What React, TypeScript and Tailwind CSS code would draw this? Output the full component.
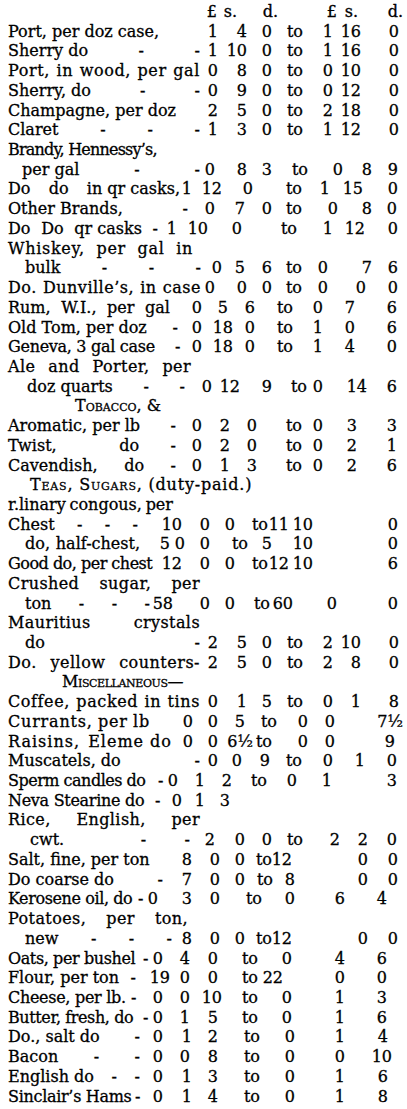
import type { ReactNode } from "react";

// column templates: label | £ | s. | d. | to | £ | s. | d.
const H = "grid-cols-[192px_17px_20px_41px_25px_34px_21px_45px]";
const STD = "grid-cols-[192px_18px_29px_25px_31px_30px_28px_38px]";
const T8 = "grid-cols-[192px_15px_32px_25px_36px_35px_29px_26px]";
const T9 = "grid-cols-[172px_12px_30px_31px_49px_28px_33px_35px]";
const T10 = "grid-cols-[180px_27px_30px_27px_30px_36px_34px_25px]";
const T11 = "grid-cols-[150px_19px_31px_34px_55px_36px_32px_33px]";
const T13 = "grid-cols-[193px_21px_23px_27px_30px_26px_44px_26px]";
const T14 = "grid-cols-[193px_14px_32px_25px_30px_26px_38px_32px]";
const T15 = "grid-cols-[162px_32px_26px_27px_38px_30px_32px_42px]";
const T16 = "grid-cols-[170px_24px_31px_22px_38px_30px_32px_42px]";
const T17 = "grid-cols-[172px_22px_31px_22px_38px_30px_32px_42px]";
const T19 = "grid-cols-[177px_27px_28px_32px_35px_16px_44px_30px]";
const TA = "grid-cols-[168px_26px_28px_27px_45px_21px_34px_40px]";
const TCH = "grid-cols-[130px_44px_28px_25px_33px_21px_24px_85px]";
const T27 = "grid-cols-[132px_30px_15px_25px_38px_24px_41px_85px]";
const T30 = "grid-cols-[142px_23px_37px_25px_35px_23px_44px_61px]";
const T36 = "grid-cols-[142px_43px_25px_27px_32px_31px_27px_68px]";
const T37 = "grid-cols-[164px_21px_25px_35px_19px_36px_27px_60px]";
const T38 = "grid-cols-[192px_18px_24px_28px_32px_31px_32px_32px]";
const T39 = "grid-cols-[155px_15px_27px_27px_35px_30px_35px_65px]";
const T40 = "grid-cols-[152px_22px_23px_25px]";
const T42 = "grid-cols-[182px_25px_30px_27px_31px_37px_28px_29px]";
const T43 = "grid-cols-[167px_17px_28px_25px_27px_20px_76px_30px]";
const T44 = "grid-cols-[155px_29px_28px_25px_28px_22px_73px_30px]";
const T45 = "grid-cols-[135px_15px_34px_28px_42px_33px_50px_42px]";
const T47 = "grid-cols-[164px_20px_28px_25px_27px_20px_76px_30px]";
const TO = "grid-cols-[140px_15px_27px_28px_40px_34px_53px_42px]";
const T49 = "grid-cols-[128px_34px_20px_28px_40px_25px_62px_42px]";
const T50 = "grid-cols-[128px_27px_27px_32px_36px_34px_53px_42px]";
const T52 = "grid-cols-[132px_23px_29px_26px_42px_35px_50px_43px]";
const T53 = "grid-cols-[132px_23px_27px_28px_42px_35px_50px_47px]";

type Row =
  | { t: "n"; c: string; p: string[]; v: string[]; i?: string; x?: string }
  | { t: "t"; p: string[]; w?: string; i?: string; x?: string }
  | { t: "h"; node: ReactNode; i: string };

const sc = "[font-variant-caps:small-caps]";

const rows: Row[] = [
  { t: "n", c: H, p: [""], v: ["£", "s.", "d.", "", "£", "s.", "d."] },
  { t: "n", c: STD, p: ["Port, per doz case,"], v: ["1", "4", "0", "to", "1", "16", "0"] },
  { t: "n", c: STD, p: ["Sherry do", "-", "-"], v: ["1", "10", "0", "to", "1", "16", "0"] },
  { t: "n", c: STD, p: ["Port,", "in", "wood,", "per", "gal"], v: ["0", "8", "0", "to", "0", "10", "0"], x: "tracking-[0.6px]" },
  { t: "n", c: STD, p: ["Sherry, do", "-", "-"], v: ["0", "9", "0", "to", "0", "12", "0"] },
  { t: "n", c: STD, p: ["Champagne, per doz"], v: ["2", "5", "0", "to", "2", "18", "0"] },
  { t: "n", c: STD, p: ["Claret", "-", "-", "-"], v: ["1", "3", "0", "to", "1", "12", "0"] },
  { t: "t", p: ["Brandy, Hennessy’s,"], x: "tracking-[-0.8px]" },
  { t: "n", c: T8, i: "pl-[14px]", p: ["per gal", "-", "-"], v: ["0", "8", "3", "to", "0", "8", "9"] },
  { t: "n", c: T9, p: ["Do", "do", "in qr casks,"], v: ["1", "12", "0", "to", "1", "15", "0"] },
  { t: "n", c: T10, p: ["Other Brands,", "-"], v: ["0", "7", "0", "to", "0", "8", "0"] },
  { t: "n", c: T11, p: ["Do", "Do", "qr casks", "-"], v: ["1", "10", "0", "to", "1", "12", "0"] },
  { t: "t", p: ["Whiskey,", "per", "gal", "in"], w: "w-[185px]", x: "tracking-[0.7px]" },
  { t: "n", c: T13, i: "pl-[17px]", p: ["bulk", "-", "-", "-"], v: ["0", "5", "6", "to", "0", "7", "6"] },
  { t: "n", c: T14, p: ["Do.", "Dunville’s,", "in", "case"], v: ["0", "0", "0", "to", "0", "0", "0"], x: "tracking-[0.5px]" },
  { t: "n", c: T15, p: ["Rum,", "W.I.,", "per", "gal"], v: ["0", "5", "6", "to", "0", "7", "6"] },
  { t: "n", c: T16, p: ["Old Tom, per doz", "-"], v: ["0", "18", "0", "to", "1", "0", "6"] },
  { t: "n", c: T17, p: ["Geneva, 3 gal case", "-"], v: ["0", "18", "0", "to", "1", "4", "0"], x: "tracking-[-0.3px]" },
  { t: "t", p: ["Ale", "and", "Porter,", "per"], w: "w-[183px]", x: "tracking-[0.4px]" },
  { t: "n", c: T19, i: "pl-[19px]", p: ["doz quarts", "-", "-"], v: ["0", "12", "9", "to", "0", "14", "6"] },
  { t: "h", i: "pl-[67px]", node: <span className={sc}>Tobacco, &amp;</span> },
  { t: "n", c: TA, p: ["Aromatic, per lb", "-"], v: ["0", "2", "0", "to", "0", "3", "3"] },
  { t: "n", c: TA, p: ["Twist,", "", "do", "-"], v: ["0", "2", "0", "to", "0", "2", "1"] },
  { t: "n", c: TA, p: ["Cavendish,", "do", "-"], v: ["0", "1", "3", "to", "0", "2", "6"] },
  {
    t: "h",
    i: "pl-[22px] tracking-[0.8px]",
    node: (
      <>
        <span className={sc}>Teas, Sugars,</span> (duty-paid.)
      </>
    ),
  },
  { t: "t", p: ["r.linary", "congous,", "per"], w: "w-[165px]" },
  { t: "n", c: TCH, p: ["Chest", "-", "-", "-"], v: ["10", "0", "0", "to", "11", "10", "0"] },
  { t: "n", c: T27, i: "pl-[17px]", p: ["do,", "half-chest,"], v: ["5", "0", "0", "to", "5", "10", "0"] },
  { t: "n", c: TCH, p: ["Good do, per chest"], v: ["12", "0", "0", "to", "12", "10", "6"], x: "tracking-[-0.5px]" },
  { t: "t", p: ["Crushed", "sugar,", "per"], w: "w-[192px]", x: "tracking-[0.4px]" },
  { t: "n", c: T30, i: "pl-[17px]", p: ["ton", "-", "-", "-"], v: ["58", "0", "0", "to", "60", "0", "0"] },
  { t: "t", p: ["Mauritius", "crystals"], w: "w-[192px]", x: "tracking-[0.4px]" },
  { t: "n", c: STD, i: "pl-[17px]", p: ["do", "-"], v: ["2", "5", "0", "to", "2", "10", "0"] },
  { t: "n", c: STD, p: ["Do.", "yellow", "counters-"], v: ["2", "5", "0", "to", "2", "8", "0"], x: "tracking-[0.5px]" },
  { t: "h", i: "pl-[54px] tracking-[-0.4px]", node: <span className={sc}>Miscellaneous—</span> },
  { t: "n", c: STD, p: ["Coffee,", "packed", "in", "tins"], v: ["0", "1", "5", "to", "0", "1", "8"], x: "tracking-[0.6px]" },
  { t: "n", c: T36, p: ["Currants,", "per", "lb"], v: ["0", "0", "5", "to", "0", "0", "7½"], x: "tracking-[0.8px]" },
  { t: "n", c: T37, p: ["Raisins,", "Eleme do"], v: ["0", "0", "6½", "to", "0", "0", "9"], x: "tracking-[1px]" },
  { t: "n", c: T38, p: ["Muscatels, do", "-"], v: ["0", "0", "9", "to", "0", "1", "0"] },
  { t: "n", c: T39, p: ["Sperm candles do", "-"], v: ["0", "1", "2", "to", "0", "1", "3"], x: "tracking-[-0.5px]" },
  { t: "n", c: T40, p: ["Neva Stearine do", "-"], v: ["0", "1", "3"], x: "tracking-[-0.3px]" },
  { t: "t", p: ["Rice,", "English,", "per"], w: "w-[192px]", x: "tracking-[0.4px]" },
  { t: "n", c: T42, i: "pl-[22px]", p: ["cwt.", "", "-", "-"], v: ["2", "0", "0", "to", "2", "2", "0"] },
  { t: "n", c: T43, p: ["Salt, fine, per ton"], v: ["8", "0", "0", "to", "12", "0", "0"] },
  { t: "n", c: T44, p: ["Do coarse do", "-"], v: ["7", "0", "0", "to", "8", "0", "0"] },
  { t: "n", c: T45, p: ["Kerosene oil, do", "-"], v: ["0", "3", "0", "to", "0", "6", "4"], x: "tracking-[-0.4px]" },
  { t: "t", p: ["Potatoes,", "per", "ton,"], w: "w-[180px]", x: "tracking-[0.4px]" },
  { t: "n", c: T47, i: "pl-[17px]", p: ["new", "-", "-", "-"], v: ["8", "0", "0", "to", "12", "0", "0"] },
  { t: "n", c: TO, p: ["Oats, per bushel", "-"], v: ["0", "4", "0", "to", "0", "4", "6"], x: "tracking-[-0.4px]" },
  { t: "n", c: T49, p: ["Flour, per ton", "-"], v: ["19", "0", "0", "to", "22", "0", "0"] },
  { t: "n", c: T50, p: ["Cheese, per lb.", "-"], v: ["0", "0", "10", "to", "0", "1", "3"], x: "tracking-[-0.3px]" },
  { t: "n", c: TO, p: ["Butter, fresh, do", "-"], v: ["0", "1", "5", "to", "0", "1", "6"], x: "tracking-[-0.4px]" },
  { t: "n", c: T52, p: ["Do., salt do", "-"], v: ["0", "1", "2", "to", "0", "1", "4"] },
  { t: "n", c: T53, p: ["Bacon", "-", "-"], v: ["0", "0", "8", "to", "0", "0", "10"] },
  { t: "n", c: T52, p: ["English do", "-", "-"], v: ["0", "1", "3", "to", "0", "1", "6"] },
  { t: "n", c: T52, p: ["Sinclair’s Hams", "-"], v: ["0", "1", "4", "to", "0", "1", "8"], x: "tracking-[-0.3px]" },
];

function Parts({ p, className }: { p: string[]; className?: string }) {
  return (
    <div className={`flex justify-between whitespace-nowrap ${className ?? ""}`}>
      {p.map((s, i) => (
        <span key={i}>{s}</span>
      ))}
    </div>
  );
}

export default function App() {
  return (
    <div className="min-h-screen bg-white pl-2 pt-[2px] font-['DejaVu_Serif',serif] text-[16px] leading-[19.73px] text-black [-webkit-text-stroke:0.3px_#000]">
      {rows.map((r, idx) => {
        if (r.t === "h") {
          return (
            <div key={idx} className={`h-[19.73px] whitespace-nowrap ${r.i}`}>
              {r.node}
            </div>
          );
        }
        if (r.t === "t") {
          return (
            <div key={idx} className="h-[19.73px]">
              <Parts p={r.p} className={`${r.w ?? "w-fit"} ${r.i ?? ""} ${r.x ?? ""}`} />
            </div>
          );
        }
        return (
          <div key={idx} className={`grid h-[19.73px] ${r.c}`}>
            <Parts p={r.p} className={`${r.i ?? ""} ${r.x ?? ""}`} />
            {r.v.map((x, j) => (
              <div key={j} className="flex justify-end whitespace-nowrap">
                {x}
              </div>
            ))}
          </div>
        );
      })}
    </div>
  );
}
